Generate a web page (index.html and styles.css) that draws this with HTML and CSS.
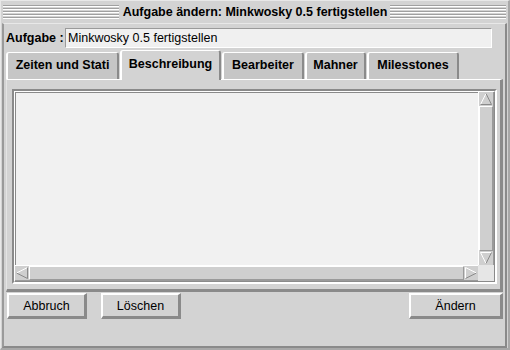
FILE: index.html
```html
<!DOCTYPE html>
<html>
<head>
<meta charset="utf-8">
<link rel="stylesheet" href="styles.css">
</head>
<body>
<div class="window">
  <div class="titlebar">
    <span class="stripes"></span>
    <span class="title">Aufgabe ändern: Minkwosky 0.5 fertigstellen</span>
    <span class="stripes"></span>
  </div>
  <div class="content">
    <div class="field-row">
      <span class="label">Aufgabe :</span>
      <div class="input">Minkwosky 0.5 fertigstellen</div>
    </div>
    <div class="tabs">
      <div class="tab tab-zeiten">Zeiten und Stati</div>
      <div class="tab tab-beschreibung active">Beschreibung</div>
      <div class="tab tab-bearbeiter">Bearbeiter</div>
      <div class="tab tab-mahner">Mahner</div>
      <div class="tab tab-milestones">Milesstones</div>
    </div>
    <div class="panel">
      <div class="frame">
        <div class="frame-inner">
          <div class="text"></div>
          <div class="vscroll">
            <div class="arrow">
              <svg width="14" height="14" viewBox="0 0 14 14"><polyline points="1.5,12.5 7,1.5" stroke="#fff" fill="none"/><polyline points="7,1.5 12.5,12.5 1.5,12.5" stroke="#8a8a8a" fill="none"/></svg>
            </div>
            <div class="track"></div>
            <div class="arrow">
              <svg width="14" height="14" viewBox="0 0 14 14"><polyline points="1.5,1.5 12.5,1.5" stroke="#fff" fill="none"/><polyline points="1.5,1.5 7,12.5" stroke="#fff" fill="none"/><polyline points="7,12.5 12.5,1.5" stroke="#8a8a8a" fill="none"/></svg>
            </div>
          </div>
          <div class="hscroll">
            <div class="arrow">
              <svg width="14" height="14" viewBox="0 0 14 14"><polyline points="12.5,1.5 1.5,7" stroke="#fff" fill="none"/><polyline points="1.5,7 12.5,12.5 12.5,1.5" stroke="#8a8a8a" fill="none"/></svg>
            </div>
            <div class="track"></div>
            <div class="arrow">
              <svg width="14" height="14" viewBox="0 0 14 14"><polyline points="1.5,12.5 1.5,1.5 12.5,7" stroke="#fff" fill="none"/><polyline points="12.5,7 1.5,12.5" stroke="#8a8a8a" fill="none"/></svg>
            </div>
          </div>
          <div class="corner"></div>
        </div>
      </div>
    </div>
    <div class="buttons">
      <button class="btn">Abbruch</button>
      <button class="btn">Löschen</button>
      <span class="spacer"></span>
      <button class="btn wide">Ändern</button>
    </div>
  </div>
</div>
</body>
</html>
```
FILE: styles.css
```css
html, body {
  margin: 0;
  padding: 0;
  background: #d3d3d3;
}
.window {
  width: 510px;
  height: 350px;
  box-sizing: border-box;
  background: #d3d3d3;
  border-style: solid;
  border-width: 1px 2px 2px 1px;
  border-color: #e8e8e8 #a8a8a8 #a8a8a8 #e8e8e8;
  display: flex;
  flex-direction: column;
  font-family: "Liberation Sans", Arial, sans-serif;
  color: #000;
}
.titlebar {
  height: 20px;
  margin: 1px 2px 0 2px;
  display: flex;
  align-items: center;
}
.stripes {
  flex: 1;
  height: 14px;
  background: repeating-linear-gradient(to bottom, #a0a0a0 0 1px, #ffffff 1px 2px, #d3d3d3 2px 3px);
}
.title {
  font-weight: bold;
  font-size: 12.5px;
  padding: 0 3px 0 4px;
  white-space: nowrap;
}
.content {
  flex: 1;
  display: flex;
  flex-direction: column;
  margin: 1px 1px 0 1px;
  border-left: 2px solid #9a9a9a;
  border-right: 2px solid #8a8a8a;
  border-bottom: 2px solid #8a8a8a;
  border-top: 1px solid #e8e8e8;
  padding: 0 2px 0 2px;
}
.field-row {
  display: flex;
  align-items: center;
  margin-top: 4px;
  height: 20px;
}
.label {
  font-weight: bold;
  font-size: 12.5px;
  width: 59px;
}
.input {
  width: 427px;
  height: 20px;
  box-sizing: border-box;
  background: #f0f0f0;
  border-style: solid;
  border-width: 1px;
  border-color: #9a9a9a #ffffff #ffffff #9a9a9a;
  font-size: 12.5px;
  line-height: 18px;
  padding-left: 2px;
}
.tabs {
  display: flex;
  align-items: flex-end;
  gap: 1px;
  margin-top: 2px;
  height: 29px;
  position: relative;
  z-index: 1;
}
.tab {
  height: 27px;
  box-sizing: border-box;
  background: #c6c6c6;
  border-style: solid;
  border-width: 1px 2px 0 2px;
  border-color: #ffffff #8a8a8a #ffffff #ffffff;
  border-radius: 3px 3px 0 0;
  font-weight: bold;
  font-size: 12.5px;
  line-height: 25px;
  text-align: center;
  white-space: nowrap;
}
.tab-zeiten { width: 113px; }
.tab-beschreibung { width: 101px; }
.tab-bearbeiter { width: 82px; }
.tab-mahner { width: 61px; }
.tab-milestones { width: 92px; }
.tab.active {
  height: 30px;
  margin-bottom: -1px;
  background: #d3d3d3;
  line-height: 27px;
}
.panel {
  height: 213px;
  box-sizing: border-box;
  border-top: 1px solid #ffffff;
  border-left: 1px solid #e4e4e4;
  border-right: 3px solid #8a8a8a;
  border-bottom: 3px solid #8a8a8a;
  padding: 9px 3px 5px 5px;
}
.frame {
  height: 100%;
  box-sizing: border-box;
  border-style: solid;
  border-width: 2px;
  border-color: #8a8a8a #ffffff #ffffff #8a8a8a;
}
.frame-inner {
  height: 100%;
  box-sizing: border-box;
  border-style: solid;
  border-width: 1px;
  border-color: #ffffff #8a8a8a #8a8a8a #ffffff;
  display: grid;
  grid-template-columns: 1fr 16px;
  grid-template-rows: 1fr 16px;
}
.text {
  background: #f1f1f1;
  border-top: 1px solid #8a8a8a;
  border-left: 1px solid #8a8a8a;
}
.vscroll {
  display: flex;
  flex-direction: column;
  background: #cfcfcf;
  border-left: 1px solid #ffffff;
  border-right: 1px solid #9a9a9a;
}
.hscroll {
  display: flex;
  background: #cfcfcf;
  border-top: 1px solid #ffffff;
  border-bottom: 1px solid #9a9a9a;
}
.corner {
  background: #e6e6e6;
}
.arrow {
  width: 14px;
  height: 14px;
  flex: none;
  display: flex;
}
.track {
  flex: 1;
  border-style: solid;
  border-width: 1px;
  border-color: #ffffff #9a9a9a #9a9a9a #ffffff;
  background: #cfcfcf;
}
.buttons {
  display: flex;
  align-items: center;
  gap: 14px;
  padding: 0 0 0 1px;
  height: 28px;
}
.spacer {
  flex: 1;
}
.btn {
  width: 80px;
  height: 26px;
  box-sizing: border-box;
  background: #d3d3d3;
  border-style: solid;
  border-width: 2px 3px 3px 2px;
  border-color: #ffffff #8a8a8a #8a8a8a #ffffff;
  font-family: "Liberation Sans", Arial, sans-serif;
  font-size: 12.5px;
  color: #000;
  padding: 0;
}
.btn.wide {
  width: 94px;
}
```
